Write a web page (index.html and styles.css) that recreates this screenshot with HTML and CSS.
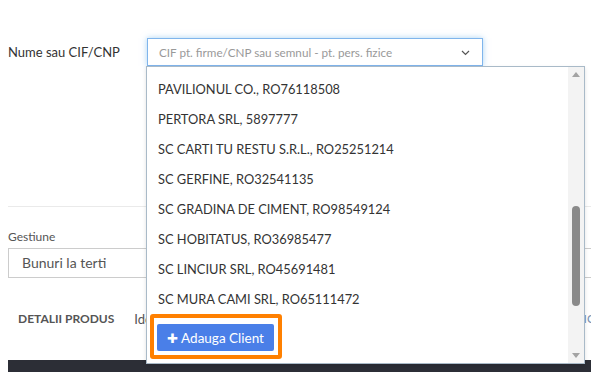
FILE: index.html
```html
<!DOCTYPE html>
<html lang="en">
<head>
    <meta charset="UTF-8">
    <title>Client nou</title>
    <link rel="stylesheet" href="styles.css">
</head>
<body>
    <div class="page">
        <div class="form-row">
            <label class="row-label">Nume sau CIF/CNP</label>
            <div class="select-wrap">
                <div class="select-box">
                    <span class="placeholder">CIF pt. firme/CNP sau semnul - pt. pers. fizice</span>
                    <svg class="chevron" width="9" height="6" viewBox="0 0 9 6"><path d="M1 1 L4.5 4.5 L8 1" fill="none" stroke="#555" stroke-width="1.2"/></svg>
                </div>

                <!-- open dropdown -->
                <div class="dropdown">
                    <ul class="options">
                        <li>PAVILIONUL CO., RO76118508</li>
                        <li>PERTORA SRL, 5897777</li>
                        <li>SC CARTI TU RESTU S.R.L., RO25251214</li>
                        <li>SC GERFINE, RO32541135</li>
                        <li>SC GRADINA DE CIMENT, RO98549124</li>
                        <li>SC HOBITATUS, RO36985477</li>
                        <li>SC LINCIUR SRL, RO45691481</li>
                        <li>SC MURA CAMI SRL, RO65111472</li>
                    </ul>
                    <div class="add-wrap">
                        <div class="highlight">
                            <button class="add-btn"><span class="plus">✚</span> Adauga Client</button>
                        </div>
                    </div>
                    <div class="scrollbar">
                        <span class="arrow up"></span>
                        <span class="thumb"></span>
                        <span class="arrow down"></span>
                    </div>
                </div>
            </div>
        </div>

        <div class="divider"></div>

        <div class="field">
            <div class="field-label">Gestiune</div>
            <div class="field-input">Bunuri la terti</div>
        </div>

        <div class="tabs">
            <span class="tab">DETALII PRODUS</span>
            <span class="tab light">Identificare</span>
            <span class="tab blue">IC</span>
        </div>

        <div class="dark-bar"></div>
    </div>
</body>
</html>
```

FILE: styles.css
```css
* {
    margin: 0;
    padding: 0;
    box-sizing: border-box;
}

body {
    font-family: Lato, 'Open Sans', sans-serif;
    background: white;
    color: #333;
    overflow: hidden;
}

.page {
    padding-left: 8px;
}

.form-row {
    display: flex;
    margin-top: 38px;
}

.row-label {
    width: 139px;
    font-size: 13px;
    line-height: 28px;
    color: #333;
}

.select-wrap {
    position: relative;
}

.select-box {
    width: 336px;
    height: 28px;
    border: 1px solid #80b5ec;
    box-shadow: 0 0 6px rgba(102, 175, 233, 0.55);
    display: flex;
    align-items: center;
    justify-content: space-between;
    padding: 0 12px 0 11px;
}

.placeholder {
    font-size: 11.7px;
    color: #999;
}

.chevron {
    margin-top: 1px;
}

.dropdown {
    position: absolute;
    top: 28px;
    left: -1px;
    width: 439px;
    height: 298px;
    background: white;
    border: 1px solid #a9bac8;
    box-shadow: 0 2px 4px rgba(0, 0, 0, 0.12);
    z-index: 5;
}

.options {
    list-style: none;
    padding-top: 7px;
}

.options li {
    height: 30px;
    line-height: 30px;
    padding-left: 11px;
    font-size: 12.85px;
    color: #333;
}

.add-wrap {
    padding-left: 3px;
}

.highlight {
    display: inline-block;
    border: 4px solid #ff8000;
    border-radius: 3px;
    padding: 6px 4px 4px 3px;
}

.add-btn {
    display: block;
    width: 117px;
    height: 27px;
    border: none;
    border-radius: 2px;
    background: #4a7fe8;
    color: white;
    font-family: Lato, sans-serif;
    font-size: 13.5px;
}

.plus {
    font-size: 13px;
}

.scrollbar {
    position: absolute;
    top: 0;
    right: 0;
    width: 16px;
    height: 100%;
    background: #f3f3f3;
}

.arrow {
    position: absolute;
    left: 4px;
    width: 0;
    height: 0;
    border-left: 4px solid transparent;
    border-right: 4px solid transparent;
}

.arrow.up {
    top: 5px;
    border-bottom: 5px solid #a3a3a3;
}

.arrow.down {
    bottom: 5px;
    border-top: 5px solid #a3a3a3;
}

.thumb {
    position: absolute;
    left: 4px;
    top: 139px;
    width: 8px;
    height: 100px;
    border-radius: 4px;
    background: #8a8a8a;
}

.divider {
    margin-top: 140px;
    border-top: 1px solid #eaeaea;
}

.field {
    margin-top: 22px;
}

.field-label {
    font-size: 12px;
    color: #555;
    line-height: 16px;
}

.field-input {
    margin-top: 3px;
    height: 30px;
    border: 1px solid #ccc;
    border-right: none;
    padding-left: 13px;
    font-size: 14px;
    line-height: 28px;
    color: #555;
}

.tabs {
    display: flex;
    align-items: flex-start;
    height: 82px;
    padding: 34px 0 0 10px;
    overflow: hidden;
    white-space: nowrap;
}

.tab {
    font-size: 12px;
    line-height: 14px;
    font-weight: bold;
    color: #555;
}

.tab.light {
    margin-left: 20px;
    font-weight: normal;
    font-size: 13px;
}

.tab.blue {
    margin-left: auto;
    margin-right: -4px;
    font-weight: normal;
    color: #7a8fb0;
}

.dark-bar {
    height: 20px;
    background: #2c2e36;
}
```
